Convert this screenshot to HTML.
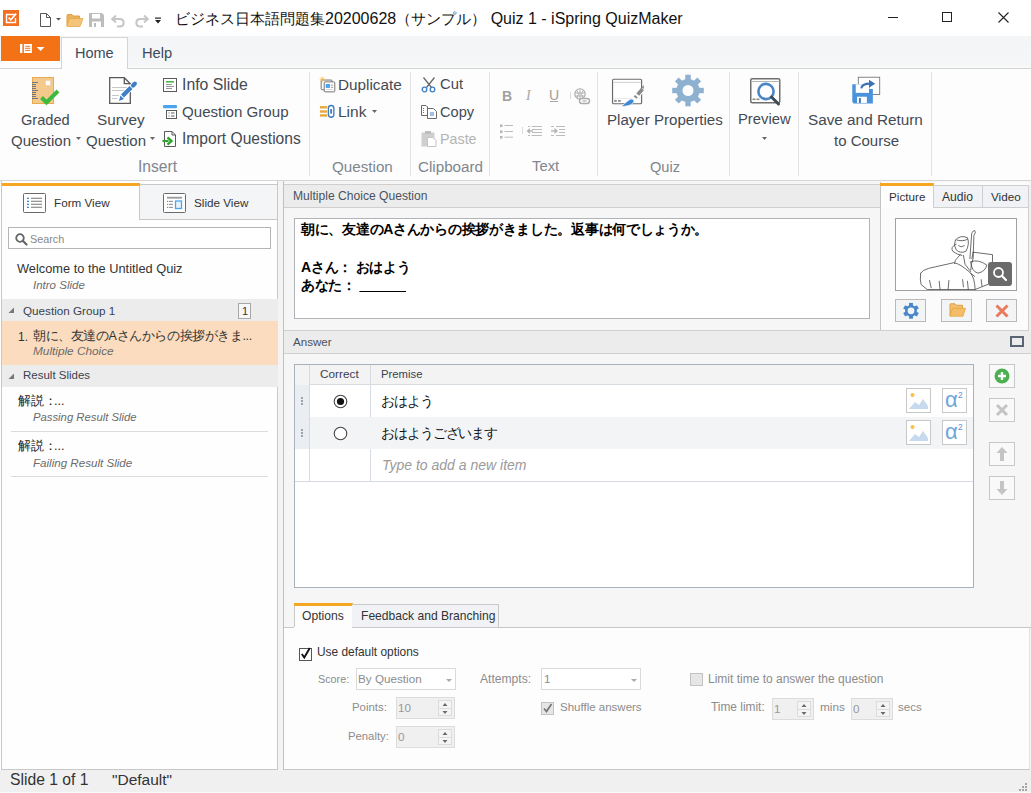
<!DOCTYPE html>
<html><head><meta charset="utf-8">
<style>
*{box-sizing:border-box;margin:0;padding:0}
html,body{width:1031px;height:793px;overflow:hidden;background:#fff;font-family:"Liberation Sans",sans-serif;color:#333}
.a{position:absolute;white-space:nowrap}
svg.a{overflow:visible}
</style></head><body>
<div class="a" style="left:0px;top:0px;width:1031px;height:36px;background:#fff"></div>
<svg class="a" style="left:3px;top:10px;" width="16" height="16" viewBox="0 0 16 16"><rect x="0" y="0" width="16" height="16" fill="#f26f21"/><path d="M11.5 4.5 H3.5 V12.5 H12.5 V8" fill="none" stroke="#fff" stroke-width="1.4"/><path d="M5.6 7.6 L7.8 9.8 L13.2 3.6" fill="none" stroke="#fff" stroke-width="1.6"/></svg>
<svg class="a" style="left:39px;top:13px;" width="24" height="15" viewBox="0 0 24 15"><path d="M1.5 0.5 H7.5 L11.5 4.5 V13.5 H1.5 Z" fill="#fff" stroke="#555" stroke-width="1"/><path d="M7.5 0.5 V4.5 H11.5" fill="none" stroke="#555"/><path d="M17 5 H22 L19.5 7.5 Z" fill="#555"/></svg>
<svg class="a" style="left:66px;top:14px;" width="18" height="13" viewBox="0 0 18 13"><path d="M1 12 V1.5 Q1 0.5 2 0.5 H6 L7.5 2 H13.5 V4.5" fill="#e9b35c" stroke="#e0a040" stroke-width="1"/><path d="M3.5 4.5 H17 L14 12.5 H1 Z" fill="#f3c47a" stroke="#e7a948" stroke-width="0.8"/></svg>
<svg class="a" style="left:89px;top:13px;" width="16" height="15" viewBox="0 0 16 15"><path d="M0 0 H13 L15 2 V14 H0 Z" fill="#bdbdbd"/><rect x="3" y="1" width="8" height="4.5" fill="#fff"/><rect x="3" y="8.5" width="9" height="5.5" fill="#fff"/><rect x="5" y="10" width="2" height="4" fill="#bdbdbd"/></svg>
<svg class="a" style="left:111px;top:15px;" width="16" height="12" viewBox="0 0 16 12"><path d="M5 0.5 L1.2 4 L5 7.5" fill="none" stroke="#c6c6c6" stroke-width="2"/><path d="M1.5 4 H9.5 A3.8 3.8 0 0 1 9.5 11.5 H6" fill="none" stroke="#c6c6c6" stroke-width="2"/></svg>
<svg class="a" style="left:133px;top:15px;" width="16" height="12" viewBox="0 0 16 12"><path d="M11 0.5 L14.8 4 L11 7.5" fill="none" stroke="#c6c6c6" stroke-width="2"/><path d="M14.5 4 H6.5 A3.8 3.8 0 0 0 6.5 11.5 H10" fill="none" stroke="#c6c6c6" stroke-width="2"/></svg>
<svg class="a" style="left:155px;top:17px;" width="7" height="7" viewBox="0 0 7 7"><rect x="0" y="0.5" width="6" height="1.2" fill="#222"/><path d="M0 3 H6 L3 6.5 Z" fill="#222"/></svg>
<div class="a" style="left:175px;top:11.30px;font-size:15px;line-height:15px;color:#111;">ビジネス日本語問題集<span style="font-size:16px">20200628</span>（サンプル）<span style="font-size:16px"> Quiz 1 - iSpring QuizMaker</span></div>
<div class="a" style="left:888px;top:17px;width:10px;height:1px;background:#222"></div>
<div class="a" style="left:942px;top:12px;width:10px;height:10px;border:1px solid #222"></div>
<svg class="a" style="left:998px;top:12px;" width="11" height="11" viewBox="0 0 11 11"><path d="M0.5 0.5 L10.5 10.5 M10.5 0.5 L0.5 10.5" stroke="#222" stroke-width="1.1"/></svg>
<div class="a" style="left:0px;top:36px;width:1031px;height:32px;background:linear-gradient(#f3f5f7,#f4f6f8 90%,#fafafa)"></div>
<div class="a" style="left:0px;top:68px;width:1031px;height:1px;background:#d4d4d4"></div>
<div class="a" style="left:1px;top:36px;width:59px;height:25px;background:#f47216"></div>
<div class="a" style="left:0px;top:61px;width:61px;height:7px;background:#fdfdfd"></div>
<svg class="a" style="left:20px;top:44px;" width="25" height="9" viewBox="0 0 25 9"><rect x="0" y="0" width="2.4" height="9" fill="#fff"/><rect x="3.9" y="0" width="8" height="9" fill="#fff"/><rect x="5.2" y="1.8" width="5" height="1" fill="#f47216"/><rect x="5.2" y="3.8" width="5" height="1" fill="#f47216"/><rect x="5.2" y="5.9" width="5" height="1" fill="#f47216"/><path d="M16.7 3 H24.5 L20.6 7 Z" fill="#fff"/></svg>
<div class="a" style="left:61px;top:37px;width:67px;height:32px;background:#fdfdfd;border:1px solid #d4d4d4;border-bottom:none"></div>
<div class="a" style="left:75px;top:45.73px;font-size:14.5px;line-height:14.5px;color:#3d4a5c;">Home</div>
<div class="a" style="left:142px;top:45.56px;font-size:14.7px;line-height:14.7px;color:#3d4a5c;">Help</div>
<div class="a" style="left:0px;top:69px;width:1031px;height:111px;background:#fdfdfd"></div>
<div class="a" style="left:0px;top:180px;width:1031px;height:1px;background:#d5d5d5"></div>
<div class="a" style="left:309px;top:72px;width:1px;height:104px;background:#e2e2e2"></div>
<div class="a" style="left:410px;top:72px;width:1px;height:104px;background:#e2e2e2"></div>
<div class="a" style="left:489px;top:72px;width:1px;height:104px;background:#e2e2e2"></div>
<div class="a" style="left:597px;top:72px;width:1px;height:104px;background:#e2e2e2"></div>
<div class="a" style="left:729px;top:72px;width:1px;height:104px;background:#e2e2e2"></div>
<div class="a" style="left:798px;top:72px;width:1px;height:104px;background:#e2e2e2"></div>
<div class="a" style="left:931px;top:72px;width:1px;height:104px;background:#e2e2e2"></div>
<div class="a" style="left:21px;top:112.64px;font-size:14.6px;line-height:14.6px;color:#444a52;">Graded</div>
<div class="a" style="left:11px;top:133.30px;font-size:15px;line-height:15px;color:#444a52;">Question</div>
<div class="a" style="left:97px;top:112.05px;font-size:15.3px;line-height:15.3px;color:#444a52;">Survey</div>
<div class="a" style="left:86px;top:133.30px;font-size:15px;line-height:15px;color:#444a52;">Question</div>
<div class="a" style="left:182px;top:76.63px;font-size:15.8px;line-height:15.8px;color:#444a52;">Info Slide</div>
<div class="a" style="left:182px;top:104.22px;font-size:15.1px;line-height:15.1px;color:#444a52;">Question Group</div>
<div class="a" style="left:182px;top:130.79px;font-size:15.6px;line-height:15.6px;color:#444a52;">Import Questions</div>
<div class="a" style="left:138px;top:158.79px;font-size:15.6px;line-height:15.6px;color:#80868e;">Insert</div>
<div class="a" style="left:338px;top:77.05px;font-size:15.3px;line-height:15.3px;color:#444a52;">Duplicate</div>
<div class="a" style="left:338px;top:103.88px;font-size:15.5px;line-height:15.5px;color:#444a52;">Link</div>
<div class="a" style="left:332px;top:159.13px;font-size:15.2px;line-height:15.2px;color:#80868e;">Question</div>
<div class="a" style="left:440px;top:77.47px;font-size:14.8px;line-height:14.8px;color:#444a52;">Cut</div>
<div class="a" style="left:440px;top:104.64px;font-size:14.6px;line-height:14.6px;color:#444a52;">Copy</div>
<div class="a" style="left:440px;top:131.90px;font-size:14.3px;line-height:14.3px;color:#b4b4b4;">Paste</div>
<div class="a" style="left:418px;top:159.13px;font-size:15.2px;line-height:15.2px;color:#80868e;">Clipboard</div>
<div class="a" style="left:532px;top:159.47px;font-size:14.8px;line-height:14.8px;color:#80868e;">Text</div>
<div class="a" style="left:607px;top:112.22px;font-size:15.1px;line-height:15.1px;color:#444a52;">Player Properties</div>
<div class="a" style="left:650px;top:159.64px;font-size:14.6px;line-height:14.6px;color:#80868e;">Quiz</div>
<div class="a" style="left:738px;top:112.47px;font-size:14.8px;line-height:14.8px;color:#444a52;">Preview</div>
<div class="a" style="left:808px;top:112.05px;font-size:15.3px;line-height:15.3px;color:#444a52;">Save and Return</div>
<div class="a" style="left:834px;top:133.30px;font-size:15px;line-height:15px;color:#444a52;">to Course</div>
<svg class="a" style="left:32px;top:77px;" width="28" height="28" viewBox="0 0 28 28"><rect x="0.5" y="0.5" width="21" height="26" fill="#f4ca8c" stroke="#e9aa52" stroke-width="1"/><rect x="0" y="5" width="6" height="1" fill="#5a6a8a" opacity="0.85"/><rect x="0" y="7" width="4" height="1" fill="#5a6a8a" opacity="0.85"/><rect x="0" y="9" width="4" height="1" fill="#5a6a8a" opacity="0.85"/><rect x="0" y="11" width="4" height="1" fill="#5a6a8a" opacity="0.85"/><rect x="0" y="13" width="6" height="1" fill="#5a6a8a" opacity="0.85"/><rect x="0" y="15" width="4" height="1" fill="#5a6a8a" opacity="0.85"/><rect x="0" y="17" width="4" height="1" fill="#5a6a8a" opacity="0.85"/><rect x="0" y="19" width="4" height="1" fill="#5a6a8a" opacity="0.85"/><rect x="0" y="21" width="6" height="1" fill="#5a6a8a" opacity="0.85"/><rect x="13.5" y="3.5" width="5" height="5" fill="#fff" stroke="#e9c9a0" stroke-width="0.6"/><path d="M9.5 20.5 L14.5 25.5 L26 14" fill="none" stroke="#3dba3d" stroke-width="4"/></svg>
<svg class="a" style="left:109px;top:77px;" width="28" height="28" viewBox="0 0 28 28"><path d="M0.7 0.7 H15.3 L21.3 6.7 V26.3 H0.7 Z" fill="#fff" stroke="#595959" stroke-width="1.3"/><path d="M15.3 0.7 V6.7 H21.3" fill="none" stroke="#595959" stroke-width="1.3"/><path d="M3 10.5 H18 M3 13.5 H16 M3 18.5 H10 M3 21.5 H8" stroke="#c8c8c8" stroke-width="1"/><path d="M13.5 19 L23.5 9" stroke="#fff" stroke-width="6"/><path d="M13.5 19 L22 10.5" stroke="#3f7fc6" stroke-width="4.2"/><path d="M24 8.5 L25.8 6.7" stroke="#3f7fc6" stroke-width="4.2" stroke-linecap="round"/><path d="M10 24 L11.5 18.5 L15 22 Z" fill="#3f7fc6"/></svg>
<svg class="a" style="left:163px;top:78px;" width="15" height="15" viewBox="0 0 15 15"><rect x="0.5" y="0.5" width="13" height="13" fill="#fff" stroke="#5a5a5a"/><rect x="3" y="3" width="8" height="1.6" fill="#4cb84c"/><path d="M3 6.5 H9 M3 8.5 H11 M3 10.5 H9" stroke="#8a8a8a" stroke-width="0.9"/></svg>
<svg class="a" style="left:163px;top:105px;" width="15" height="15" viewBox="0 0 15 15"><rect x="0" y="0" width="14" height="3.2" rx="1.2" fill="#4aa3ef"/><rect x="3.5" y="5.5" width="10" height="8" fill="#fff" stroke="#5a5a5a"/><path d="M5.5 8 H6.5 M8 8 H11.5 M5.5 11 H6.5 M8 11 H11.5" stroke="#5a5a5a" stroke-width="1"/></svg>
<svg class="a" style="left:162px;top:131px;" width="16" height="16" viewBox="0 0 16 16"><path d="M2.5 0.5 H10 L13.5 4 V15.5 H2.5 Z" fill="#fff" stroke="#5a5a5a"/><path d="M10 0.5 V4 H13.5" fill="none" stroke="#5a5a5a"/><path d="M0.5 10 H6.5" stroke="#2ea42e" stroke-width="2.2"/><path d="M5.5 6.3 L9.5 10 L5.5 13.7" fill="none" stroke="#2ea42e" stroke-width="2.4"/></svg>
<svg class="a" style="left:316px;top:74px" width="24" height="48" viewBox="0 0 396 793"><rect x="85" y="100" width="180" height="160" rx="15" fill="#fff" stroke="#707070" stroke-width="16"/><rect x="135" y="130" width="175" height="165" rx="15" fill="#fff" stroke="#707070" stroke-width="16"/><rect x="160" y="165" width="70" height="65" fill="#4aa3ef"/><path d="M245 185 H280 M245 220 H280" stroke="#777" stroke-width="12"/><path d="M165 255 H280" stroke="#aaa" stroke-width="8"/><path d="M105 45 V135 M60 90 H150 M73 58 L137 122 M137 58 L73 122" stroke="#f2b84b" stroke-width="12"/><rect x="65" y="530" width="120" height="40" fill="#e8a93c"/><rect x="65" y="600" width="120" height="40" fill="#e8a93c"/><rect x="65" y="665" width="120" height="40" fill="#e8a93c"/><rect x="205" y="520" width="90" height="195" rx="45" fill="none" stroke="#3d7cc0" stroke-width="22"/><rect x="235" y="580" width="30" height="75" fill="#3d7cc0"/></svg>
<svg class="a" style="left:372px;top:110px;" width="5" height="3" viewBox="0 0 5 3"><path d="M0 0 H5 L2.5 3 Z" fill="#666"/></svg>
<svg class="a" style="left:421px;top:77px;" width="16" height="16" viewBox="0 0 16 16"><path d="M2.5 0.5 L10.5 10.5 M13.5 0.5 L5.5 10.5" stroke="#6a6a6a" stroke-width="1.3"/><circle cx="3.5" cy="12.5" r="2.3" fill="#fff" stroke="#3f7fc6" stroke-width="1.3"/><circle cx="11.5" cy="12.5" r="2.3" fill="#fff" stroke="#3f7fc6" stroke-width="1.3"/></svg>
<svg class="a" style="left:421px;top:105px;" width="17" height="15" viewBox="0 0 17 15"><path d="M0.5 0.5 H5 L6.5 2 V10.5 H0.5 Z" fill="#fff" stroke="#6a6a6a"/><path d="M2 3.5 H3 M2 5.5 H3 M2 7.5 H3" stroke="#3f7fc6"/><path d="M6.5 3.5 H12.5 L15.5 6.5 V13.5 H6.5 Z" fill="#fff" stroke="#6a6a6a"/><path d="M9 8 H13 M9 10 H13" stroke="#3f7fc6"/></svg>
<svg class="a" style="left:421px;top:131px;" width="16" height="16" viewBox="0 0 16 16"><rect x="0.5" y="1.5" width="13" height="14" fill="#cfcfcf"/><rect x="4" y="0" width="6" height="3" fill="#bdbdbd"/><path d="M6.5 6.5 H12 L15 9.5 V15.5 H6.5 Z" fill="#fff" stroke="#c4c4c4"/></svg>
<div class="a" style="left:502px;top:89.15px;font-size:14px;line-height:14px;color:#a0a0a0;font-weight:bold">B</div>
<div class="a" style="left:526px;top:89.15px;font-size:14px;line-height:14px;color:#a8a8a8;font-family:'Liberation Serif',serif;font-style:italic">I</div>
<div class="a" style="left:549px;top:88.15px;font-size:14px;line-height:14px;color:#a0a0a0;">U</div>
<div class="a" style="left:550px;top:101px;width:8px;height:1px;background:#a8a8a8"></div>
<div class="a" style="left:570px;top:92px;width:1px;height:7px;background:#dcdcdc"></div>
<svg class="a" style="left:574px;top:88px;" width="17" height="17" viewBox="0 0 17 17"><circle cx="6" cy="6" r="5.2" fill="none" stroke="#ababab" stroke-width="1.1"/><path d="M1 5 H11 M1 8 H11 M6 1 V11 M3 2.5 Q6 6 3 10 M9 2.5 Q6 6 9 10" fill="none" stroke="#ababab" stroke-width="0.9"/><rect x="5.5" y="10.5" width="10" height="5" rx="2.5" fill="#fff" stroke="#ababab" stroke-width="1.4"/><path d="M8.5 13 H12.5" stroke="#ababab" stroke-width="1.2"/></svg>
<svg class="a" style="left:500px;top:124px;" width="14" height="15" viewBox="0 0 14 15"><rect x="0" y="0.5" width="2.5" height="2.5" fill="#b4b4b4"/><rect x="0" y="6.5" width="2.5" height="2.5" fill="#b4b4b4"/><rect x="0" y="12" width="2.5" height="2.5" fill="#b4b4b4"/><path d="M4.5 1.5 H13 M4.5 7.5 H13 M4.5 13.2 H13" stroke="#b4b4b4" stroke-width="0.9"/></svg>
<div class="a" style="left:522px;top:127px;width:1px;height:7px;background:#dcdcdc"></div>
<svg class="a" style="left:526px;top:126px;" width="17" height="11" viewBox="0 0 17 11"><path d="M2 0.5 H4 M5.5 0.5 H16 M6 3.5 H16 M6 6.5 H16 M2 9.5 H4 M5.5 9.5 H16" stroke="#b4b4b4" stroke-width="0.9"/><path d="M0.5 5 L4 2 V8 Z" fill="#b4b4b4"/><path d="M2 5 H7" stroke="#b4b4b4" stroke-width="1.4"/></svg>
<svg class="a" style="left:551px;top:126px;" width="15" height="11" viewBox="0 0 15 11"><path d="M0 0.5 H3 M5 0.5 H14 M8 3.5 H14 M8 6.5 H14 M0 9.5 H3 M5 9.5 H14" stroke="#b4b4b4" stroke-width="0.9"/><path d="M7 5 L3.5 2 V8 Z" fill="#b4b4b4"/><path d="M0 5 H5" stroke="#b4b4b4" stroke-width="1.4"/></svg>
<svg class="a" style="left:608px;top:74px" width="40" height="36" viewBox="0 0 881 793"><rect x="100" y="115" width="640" height="540" rx="28" fill="#fff" stroke="#6b6b6b" stroke-width="26"/><path d="M120 185 H720" stroke="#bdbdbd" stroke-width="16"/><path d="M110 540 H730" stroke="#d0d0d0" stroke-width="10"/><rect x="135" y="572" width="58" height="40" fill="#8a8a8a"/><rect x="222" y="572" width="58" height="40" fill="#8a8a8a"/><path d="M560 560 L740 360" stroke="#fff" stroke-width="120"/><path d="M595 520 L625 487" stroke="#8a8a8a" stroke-width="80"/><path d="M655 455 L760 330" stroke="#8a8a8a" stroke-width="80"/><path d="M740 300 L790 240 L790 330 Z" fill="#8a8a8a"/><path d="M290 715 Q380 640 440 590 Q500 530 560 560 Q590 600 540 650 Q480 710 290 715 Z" fill="#3f86d2" stroke="#fff" stroke-width="14"/></svg>
<svg class="a" style="left:670px;top:73px;" width="36" height="36" viewBox="0 0 36 36"><circle cx="18" cy="17.5" r="11.6" fill="#8fb1d0"/><rect x="15.3" y="1.6999999999999993" width="5.4" height="15.8" fill="#8fb1d0" transform="rotate(0.0 18 17.5)"/><rect x="15.3" y="1.6999999999999993" width="5.4" height="15.8" fill="#8fb1d0" transform="rotate(45.0 18 17.5)"/><rect x="15.3" y="1.6999999999999993" width="5.4" height="15.8" fill="#8fb1d0" transform="rotate(90.0 18 17.5)"/><rect x="15.3" y="1.6999999999999993" width="5.4" height="15.8" fill="#8fb1d0" transform="rotate(135.0 18 17.5)"/><rect x="15.3" y="1.6999999999999993" width="5.4" height="15.8" fill="#8fb1d0" transform="rotate(180.0 18 17.5)"/><rect x="15.3" y="1.6999999999999993" width="5.4" height="15.8" fill="#8fb1d0" transform="rotate(225.0 18 17.5)"/><rect x="15.3" y="1.6999999999999993" width="5.4" height="15.8" fill="#8fb1d0" transform="rotate(270.0 18 17.5)"/><rect x="15.3" y="1.6999999999999993" width="5.4" height="15.8" fill="#8fb1d0" transform="rotate(315.0 18 17.5)"/><circle cx="18" cy="17.5" r="5.5" fill="#fdfdfd"/></svg>
<svg class="a" style="left:750px;top:78px;" width="32" height="29" viewBox="0 0 32 29"><rect x="0.75" y="0.75" width="29" height="24" rx="1.5" fill="#fff" stroke="#6e6e6e" stroke-width="1.5"/><path d="M1 3.5 H29.5" stroke="#b5b5b5" stroke-width="1"/><rect x="2.5" y="20.5" width="3" height="1.6" fill="#8a8a8a"/><rect x="6.5" y="20.5" width="3" height="1.6" fill="#8a8a8a"/><circle cx="16" cy="13.5" r="7.6" fill="#fff" stroke="#4a86c5" stroke-width="2.6"/><path d="M21.5 19 L28.5 26" stroke="#3e4a58" stroke-width="3" stroke-linecap="round"/></svg>
<svg class="a" style="left:762px;top:137px;" width="5" height="3" viewBox="0 0 5 3"><path d="M0 0 H5 L2.5 3 Z" fill="#666"/></svg>
<svg class="a" style="left:76px;top:137px;" width="5" height="3" viewBox="0 0 5 3"><path d="M0 0 H5 L2.5 3 Z" fill="#666"/></svg>
<svg class="a" style="left:150px;top:137px;" width="5" height="3" viewBox="0 0 5 3"><path d="M0 0 H5 L2.5 3 Z" fill="#666"/></svg>
<svg class="a" style="left:848px;top:74px" width="36" height="34" viewBox="0 0 840 793"><rect x="240" y="75" width="500" height="405" fill="#fff" stroke="#707070" stroke-width="20"/><path d="M100 240 H500 V350 H580 V690 H130 L100 650 Z" fill="#4a92dc"/><rect x="180" y="240" width="310" height="200" fill="#fff"/><rect x="210" y="530" width="230" height="145" fill="#fff"/><rect x="255" y="560" width="45" height="115" fill="#3a78c0"/><path d="M310 335 Q320 225 520 225" fill="none" stroke="#3a72b5" stroke-width="48"/><path d="M490 135 L635 228 L490 320 Z" fill="#3a72b5"/></svg>
<div class="a" style="left:1px;top:181px;width:277px;height:589px;background:#fefefe;border-left:1px solid #c8c8c8;border-right:1px solid #c8c8c8;border-bottom:1px solid #c8c8c8"></div>
<div class="a" style="left:139px;top:184px;width:139px;height:36px;background:#f3f5f7;border:1px solid #c8c8c8"></div>
<div class="a" style="left:2px;top:183px;width:138px;height:3px;background:#f5a623"></div>
<div class="a" style="left:54px;top:197.10px;font-size:11.7px;line-height:11.7px;color:#333;">Form View</div>
<div class="a" style="left:194px;top:197.10px;font-size:11.7px;line-height:11.7px;color:#333;">Slide View</div>
<div class="a" style="left:8px;top:227px;width:263px;height:22px;background:#fff;border:1px solid #b5b5b5"></div>
<div class="a" style="left:30px;top:233.86px;font-size:10.8px;line-height:10.8px;color:#888;">Search</div>
<div class="a" style="left:17px;top:263.16px;font-size:12.8px;line-height:12.8px;color:#333;">Welcome to the Untitled Quiz</div>
<div class="a" style="left:33px;top:280.27px;font-size:11.5px;line-height:11.5px;color:#6b6b6b;font-style:italic">Intro Slide</div>
<div class="a" style="left:2px;top:299px;width:276px;height:22px;background:#ececec"></div>
<div class="a" style="left:23px;top:305.10px;font-size:11.7px;line-height:11.7px;color:#3a4250;">Question Group 1</div>
<div class="a" style="left:238px;top:303px;width:13px;height:16px;background:#f7f7f7;border:1px solid #a8a8a8"></div>
<div class="a" style="left:242px;top:305.69px;font-size:11px;line-height:11px;color:#333;">1</div>
<div class="a" style="left:2px;top:321px;width:276px;height:44px;background:#fbdcbe"></div>
<div class="a" style="left:18px;top:330.84px;font-size:12px;line-height:12px;color:#333;">1.</div>
<div class="a" style="left:33px;top:330.42px;font-size:12.5px;line-height:12.5px;color:#333;letter-spacing:-0.4px">朝に、友達のAさんからの挨拶がきま...</div>
<div class="a" style="left:33px;top:346.01px;font-size:11.8px;line-height:11.8px;color:#6b6b6b;font-style:italic">Multiple Choice</div>
<div class="a" style="left:2px;top:365px;width:276px;height:22px;background:#ececec"></div>
<div class="a" style="left:23px;top:370.27px;font-size:11.5px;line-height:11.5px;color:#3a4250;">Result Slides</div>
<div class="a" style="left:18px;top:395.42px;font-size:12.5px;line-height:12.5px;color:#222;">解説<span style='letter-spacing:-3px'>：</span>...</div>
<div class="a" style="left:33px;top:412.43px;font-size:11.3px;line-height:11.3px;color:#6b6b6b;font-style:italic">Passing Result Slide</div>
<div class="a" style="left:11px;top:431px;width:257px;height:1px;background:#dcdcdc"></div>
<div class="a" style="left:18px;top:440.42px;font-size:12.5px;line-height:12.5px;color:#222;">解説<span style='letter-spacing:-3px'>：</span>...</div>
<div class="a" style="left:33px;top:457.18px;font-size:11.6px;line-height:11.6px;color:#6b6b6b;font-style:italic">Failing Result Slide</div>
<div class="a" style="left:11px;top:476px;width:257px;height:1px;background:#dcdcdc"></div>
<svg class="a" style="left:23px;top:193px;" width="23" height="20" viewBox="0 0 23 20"><rect x="0.5" y="0.5" width="22" height="19" rx="1" fill="#fff" stroke="#6a6a6a" stroke-width="1"/><rect x="4" y="4.7" width="2" height="1.3" fill="#3f86d2"/><rect x="8" y="4.7" width="11" height="1.2" fill="#8c8c8c"/><rect x="4" y="7.7" width="2" height="1.3" fill="#3f86d2"/><rect x="8" y="7.7" width="11" height="1.2" fill="#8c8c8c"/><rect x="4" y="10.7" width="2" height="1.3" fill="#3f86d2"/><rect x="8" y="10.7" width="11" height="1.2" fill="#8c8c8c"/><rect x="4" y="13.7" width="2" height="1.3" fill="#3f86d2"/><rect x="8" y="13.7" width="11" height="1.2" fill="#8c8c8c"/></svg>
<svg class="a" style="left:163px;top:193px;" width="23" height="20" viewBox="0 0 23 20"><rect x="0.5" y="0.5" width="22" height="19" rx="1" fill="#fff" stroke="#6a6a6a" stroke-width="1"/><rect x="4" y="3.8" width="15" height="1.8" fill="#999"/><rect x="4" y="7.8" width="1.2" height="1.2" fill="#888"/><rect x="6" y="7.8" width="4" height="1.2" fill="#999"/><rect x="4" y="10.8" width="1.2" height="1.2" fill="#888"/><rect x="6" y="10.8" width="4" height="1.2" fill="#999"/><rect x="4" y="13.8" width="1.2" height="1.2" fill="#888"/><rect x="6" y="13.8" width="4" height="1.2" fill="#999"/><rect x="12.5" y="8" width="6" height="7.5" fill="#e8f3fc" stroke="#4aa8f0" stroke-width="1.3"/></svg>
<svg class="a" style="left:15px;top:233px;" width="13" height="13" viewBox="0 0 13 13"><circle cx="5" cy="5" r="3.8" fill="none" stroke="#666" stroke-width="1.8"/><path d="M7.8 7.8 L11.5 11.5" stroke="#666" stroke-width="2.2" stroke-linecap="round"/></svg>
<svg class="a" style="left:8px;top:307px;" width="7" height="7" viewBox="0 0 7 7"><path d="M6 0.5 V6 H0.5 Z" fill="#777"/></svg>
<svg class="a" style="left:8px;top:373px;" width="7" height="7" viewBox="0 0 7 7"><path d="M6 0.5 V6 H0.5 Z" fill="#777"/></svg>
<div class="a" style="left:278px;top:181px;width:5px;height:589px;background:#f4f4f4"></div>
<div class="a" style="left:283px;top:181px;width:748px;height:589px;background:#f6f6f6;border-left:1px solid #c0c0c0"></div>
<div class="a" style="left:284px;top:184px;width:596px;height:24px;background:#ececec;border-top:1px solid #cfcfcf;border-bottom:1px solid #cfcfcf"></div>
<div class="a" style="left:293px;top:189.76px;font-size:12.1px;line-height:12.1px;color:#4a525c;">Multiple Choice Question</div>
<div class="a" style="left:294px;top:218px;width:576px;height:101px;background:#fff;border:1px solid #b0b4b8"></div>
<div class="a" style="left:880px;top:182px;width:149px;height:149px;background:#fbfbfb;border-left:1px solid #c4c4c4"></div>
<div class="a" style="left:284px;top:330px;width:747px;height:24px;background:#ececec;border-top:1px solid #cfcfcf;border-bottom:1px solid #cfcfcf"></div>
<div class="a" style="left:293px;top:336.18px;font-size:11.6px;line-height:11.6px;color:#4a525c;">Answer</div>
<div class="a" style="left:301px;top:222.15px;font-size:14px;line-height:14px;color:#000;font-weight:bold;letter-spacing:-0.3px">朝に、友達のAさんからの挨拶がきました。返事は何でしょうか。</div>
<div class="a" style="left:301px;top:260.15px;font-size:14px;line-height:14px;color:#000;font-weight:bold;letter-spacing:-0.3px">Aさん：&nbsp;おはよう</div>
<div class="a" style="left:301px;top:278.15px;font-size:14px;line-height:14px;color:#000;font-weight:bold;letter-spacing:-0.3px">あなた：&nbsp;<span style='text-decoration:underline'>&nbsp;&nbsp;&nbsp;&nbsp;&nbsp;&nbsp;&nbsp;&nbsp;&nbsp;&nbsp;&nbsp;&nbsp;&nbsp;</span></div>
<div class="a" style="left:880px;top:183px;width:54px;height:3px;background:#f5a623"></div>
<div class="a" style="left:881px;top:186px;width:53px;height:22px;background:#fdfdfd"></div>
<div class="a" style="left:933px;top:185px;width:50px;height:23px;background:#f0f2f5;border:1px solid #cfcfcf;border-bottom:1px solid #cfcfcf"></div>
<div class="a" style="left:982px;top:185px;width:47px;height:23px;background:#f0f2f5;border:1px solid #cfcfcf"></div>
<div class="a" style="left:889px;top:191.10px;font-size:11.7px;line-height:11.7px;color:#333;">Picture</div>
<div class="a" style="left:942px;top:190.76px;font-size:12.1px;line-height:12.1px;color:#333;">Audio</div>
<div class="a" style="left:991px;top:191.10px;font-size:11.7px;line-height:11.7px;color:#333;">Video</div>
<div class="a" style="left:1028px;top:185px;width:3px;height:146px;background:#f0f0f0;border-left:1px solid #cfcfcf"></div>
<div class="a" style="left:895px;top:218px;width:122px;height:73px;background:#fff;border:1px solid #a0a0a0"></div>
<div class="a" style="left:1010px;top:336px;width:14px;height:11px;border:2px solid #5b6472"></div>
<div class="a" style="left:294px;top:364px;width:680px;height:224px;background:#fff;border:1px solid #a9b2bb"></div>
<div class="a" style="left:295px;top:365px;width:678px;height:20px;background:#f3f3f3;border-bottom:1px solid #d8dde2"></div>
<div class="a" style="left:295px;top:385px;width:15px;height:64px;background:#eaeef3"></div>
<div class="a" style="left:295px;top:365px;width:15px;height:20px;background:#f3f3f3"></div>
<div class="a" style="left:309px;top:365px;width:1px;height:117px;background:#d5dbe0"></div>
<div class="a" style="left:370px;top:365px;width:1px;height:117px;background:#d5dbe0"></div>
<div class="a" style="left:310px;top:417px;width:663px;height:32px;background:#f3f4f6"></div>
<div class="a" style="left:295px;top:481px;width:678px;height:1px;background:#d5dbe0"></div>
<div class="a" style="left:320px;top:369.01px;font-size:11.8px;line-height:11.8px;color:#3a4250;">Correct</div>
<div class="a" style="left:381px;top:369.43px;font-size:11.3px;line-height:11.3px;color:#3a4250;">Premise</div>
<div class="a" style="left:381px;top:394.57px;font-size:13.5px;line-height:13.5px;color:#111;letter-spacing:-1.1px">おはよう</div>
<div class="a" style="left:381px;top:426.57px;font-size:13.5px;line-height:13.5px;color:#111;letter-spacing:-1.1px">おはようございます</div>
<div class="a" style="left:382px;top:458.15px;font-size:14px;line-height:14px;color:#9a9a9a;font-style:italic">Type to add a new item</div>
<div class="a" style="left:301px;top:397px;width:2px;height:2px;background:#9aa3ad"></div>
<div class="a" style="left:301px;top:400px;width:2px;height:2px;background:#9aa3ad"></div>
<div class="a" style="left:301px;top:403px;width:2px;height:2px;background:#9aa3ad"></div>
<div class="a" style="left:301px;top:429px;width:2px;height:2px;background:#9aa3ad"></div>
<div class="a" style="left:301px;top:432px;width:2px;height:2px;background:#9aa3ad"></div>
<div class="a" style="left:301px;top:435px;width:2px;height:2px;background:#9aa3ad"></div>
<svg class="a" style="left:333px;top:394px;" width="15" height="15" viewBox="0 0 15 15"><circle cx="7.5" cy="7.5" r="6.3" fill="#fff" stroke="#444" stroke-width="1.1"/><circle cx="7.5" cy="7.5" r="3.6" fill="#111"/></svg>
<svg class="a" style="left:333px;top:426px;" width="15" height="15" viewBox="0 0 15 15"><circle cx="7.5" cy="7.5" r="6.3" fill="#fff" stroke="#444" stroke-width="1.1"/></svg>
<div class="a" style="left:906px;top:388px;width:25px;height:25px;background:#fff;border:1px solid #c8c8c8"></div>
<svg class="a" style="left:908px;top:390px;" width="21" height="21" viewBox="0 0 21 21"><circle cx="4.5" cy="5" r="2" fill="#f7c04a"/><path d="M1 19 L7 12 L11 15 L15 9 L20 16 V19 Z" fill="#c6d9ee"/></svg>
<div class="a" style="left:942px;top:388px;width:25px;height:25px;background:#fff;border:1px solid #c8c8c8"></div>
<div class="a" style="left:945px;top:389.38px;font-size:22px;line-height:22px;color:#6aa6dc;">&alpha;</div>
<div class="a" style="left:958px;top:390.80px;font-size:8.5px;line-height:8.5px;color:#6a8fd8;">2</div>
<div class="a" style="left:906px;top:420px;width:25px;height:25px;background:#fff;border:1px solid #c8c8c8"></div>
<svg class="a" style="left:908px;top:422px;" width="21" height="21" viewBox="0 0 21 21"><circle cx="4.5" cy="5" r="2" fill="#f7c04a"/><path d="M1 19 L7 12 L11 15 L15 9 L20 16 V19 Z" fill="#c6d9ee"/></svg>
<div class="a" style="left:942px;top:420px;width:25px;height:25px;background:#fff;border:1px solid #c8c8c8"></div>
<div class="a" style="left:945px;top:421.38px;font-size:22px;line-height:22px;color:#6aa6dc;">&alpha;</div>
<div class="a" style="left:958px;top:422.80px;font-size:8.5px;line-height:8.5px;color:#6a8fd8;">2</div>
<div class="a" style="left:989px;top:364px;width:26px;height:24px;background:#f9f9f9;border:1px solid #c8c8c8"></div>
<div class="a" style="left:989px;top:398px;width:26px;height:24px;background:#f9f9f9;border:1px solid #c8c8c8"></div>
<div class="a" style="left:989px;top:442px;width:26px;height:24px;background:#f9f9f9;border:1px solid #c8c8c8"></div>
<div class="a" style="left:989px;top:476px;width:26px;height:24px;background:#f9f9f9;border:1px solid #c8c8c8"></div>
<svg class="a" style="left:994px;top:368px;" width="16" height="16" viewBox="0 0 16 16"><circle cx="8" cy="8" r="7.5" fill="#4caf50"/><path d="M8 4 V12 M4 8 H12" stroke="#fff" stroke-width="2.4"/></svg>
<svg class="a" style="left:995px;top:403px;" width="14" height="14" viewBox="0 0 14 14"><path d="M2 2 L12 12 M12 2 L2 12" stroke="#c4c4c4" stroke-width="3"/></svg>
<svg class="a" style="left:995px;top:446px;" width="14" height="16" viewBox="0 0 14 16"><path d="M7 1 L12.5 7 H9 V15 H5 V7 H1.5 Z" fill="#c4c4c4"/></svg>
<svg class="a" style="left:995px;top:480px;" width="14" height="16" viewBox="0 0 14 16"><path d="M7 15 L12.5 9 H9 V1 H5 V9 H1.5 Z" fill="#c4c4c4"/></svg>
<div class="a" style="left:284px;top:627px;width:747px;height:1px;background:#c8c8c8"></div>
<div class="a" style="left:294px;top:603px;width:59px;height:3px;background:#f5a623"></div>
<div class="a" style="left:294px;top:606px;width:59px;height:22px;background:#fdfdfd;border-left:1px solid #c8c8c8;border-right:1px solid #c8c8c8"></div>
<div class="a" style="left:352px;top:604px;width:147px;height:24px;background:#f0f2f5;border:1px solid #c8c8c8;border-left:none"></div>
<div class="a" style="left:302px;top:609.76px;font-size:12.1px;line-height:12.1px;color:#333;">Options</div>
<div class="a" style="left:361px;top:609.76px;font-size:12.1px;line-height:12.1px;color:#333;">Feedback and Branching</div>
<div class="a" style="left:284px;top:628px;width:746px;height:142px;background:#fdfdfd;border-right:1px solid #e2e2e2;border-bottom:1px solid #c8c8c8"></div>
<div class="a" style="left:294px;top:627px;width:58px;height:2px;background:#fdfdfd"></div>
<svg class="a" style="left:299px;top:647px;" width="14" height="14" viewBox="0 0 14 14"><rect x="0.5" y="1.5" width="12" height="12" fill="#fff" stroke="#555"/><path d="M2.8 7 L5.3 10.5 L10.8 1" fill="none" stroke="#111" stroke-width="1.9"/></svg>
<div class="a" style="left:317px;top:646.93px;font-size:11.9px;line-height:11.9px;color:#333;">Use default options</div>
<div class="a" style="left:318px;top:673.86px;font-size:10.8px;line-height:10.8px;color:#8c8c8c;">Score:</div>
<div class="a" style="left:356px;top:668px;width:100px;height:22px;background:#fff;border:1px solid #dadada"></div>
<div class="a" style="left:358px;top:673.10px;font-size:11.7px;line-height:11.7px;color:#8c8c8c;">By Question</div>
<svg class="a" style="left:446px;top:679px;" width="6" height="4" viewBox="0 0 6 4"><path d="M0 0 H6 L3 3 Z" fill="#aaa"/></svg>
<div class="a" style="left:480px;top:672.76px;font-size:12.1px;line-height:12.1px;color:#8c8c8c;">Attempts:</div>
<div class="a" style="left:541px;top:668px;width:100px;height:22px;background:#fff;border:1px solid #dadada"></div>
<div class="a" style="left:544px;top:673.10px;font-size:11.7px;line-height:11.7px;color:#8c8c8c;">1</div>
<svg class="a" style="left:631px;top:679px;" width="6" height="4" viewBox="0 0 6 4"><path d="M0 0 H6 L3 3 Z" fill="#aaa"/></svg>
<div class="a" style="left:352px;top:702.35px;font-size:11.4px;line-height:11.4px;color:#8c8c8c;">Points:</div>
<div class="a" style="left:348px;top:731.43px;font-size:11.3px;line-height:11.3px;color:#8c8c8c;">Penalty:</div>
<div class="a" style="left:396px;top:697px;width:59px;height:22px;background:#f0f0f0;border:1px solid #dcdcdc"></div>
<div class="a" style="left:398px;top:702.10px;font-size:11.7px;line-height:11.7px;color:#999;">10</div>
<div class="a" style="left:438px;top:700px;width:14px;height:16px;background:#f4f4f4;border:1px solid #dcdcdc"></div>
<div class="a" style="left:438px;top:708px;width:14px;height:1px;background:#dcdcdc"></div>
<svg class="a" style="left:441px;top:702px;" width="8" height="14" viewBox="0 0 8 14"><path d="M4 1 L6.5 4 H1.5 Z M4 12 L6.5 9 H1.5 Z" fill="#6a6a6a"/></svg>
<div class="a" style="left:396px;top:726px;width:59px;height:22px;background:#f0f0f0;border:1px solid #dcdcdc"></div>
<div class="a" style="left:398px;top:731.10px;font-size:11.7px;line-height:11.7px;color:#999;">0</div>
<div class="a" style="left:438px;top:729px;width:14px;height:16px;background:#f4f4f4;border:1px solid #dcdcdc"></div>
<div class="a" style="left:438px;top:737px;width:14px;height:1px;background:#dcdcdc"></div>
<svg class="a" style="left:441px;top:731px;" width="8" height="14" viewBox="0 0 8 14"><path d="M4 1 L6.5 4 H1.5 Z M4 12 L6.5 9 H1.5 Z" fill="#6a6a6a"/></svg>
<svg class="a" style="left:541px;top:702px;" width="14" height="14" viewBox="0 0 14 14"><rect x="0.5" y="0.5" width="12" height="12" fill="#e6e6e6" stroke="#c2c2c2"/><path d="M3 6.5 L5.5 9.5 L10.5 2" fill="none" stroke="#777" stroke-width="1.8"/></svg>
<div class="a" style="left:560px;top:702.27px;font-size:11.5px;line-height:11.5px;color:#8c8c8c;">Shuffle answers</div>
<div class="a" style="left:690px;top:673px;width:13px;height:13px;background:#e6e6e6;border:1px solid #c2c2c2"></div>
<div class="a" style="left:708px;top:672.84px;font-size:12px;line-height:12px;color:#8c8c8c;">Limit time to answer the question</div>
<div class="a" style="left:711px;top:701.93px;font-size:11.9px;line-height:11.9px;color:#8c8c8c;">Time limit:</div>
<div class="a" style="left:772px;top:698px;width:42px;height:22px;background:#f0f0f0;border:1px solid #dcdcdc"></div>
<div class="a" style="left:774px;top:703.10px;font-size:11.7px;line-height:11.7px;color:#999;">1</div>
<div class="a" style="left:797px;top:701px;width:14px;height:16px;background:#f4f4f4;border:1px solid #dcdcdc"></div>
<div class="a" style="left:797px;top:709px;width:14px;height:1px;background:#dcdcdc"></div>
<svg class="a" style="left:800px;top:703px;" width="8" height="14" viewBox="0 0 8 14"><path d="M4 1 L6.5 4 H1.5 Z M4 12 L6.5 9 H1.5 Z" fill="#6a6a6a"/></svg>
<div class="a" style="left:820px;top:702.01px;font-size:11.8px;line-height:11.8px;color:#8c8c8c;">mins</div>
<div class="a" style="left:851px;top:698px;width:42px;height:22px;background:#f0f0f0;border:1px solid #dcdcdc"></div>
<div class="a" style="left:853px;top:703.10px;font-size:11.7px;line-height:11.7px;color:#999;">0</div>
<div class="a" style="left:876px;top:701px;width:14px;height:16px;background:#f4f4f4;border:1px solid #dcdcdc"></div>
<div class="a" style="left:876px;top:709px;width:14px;height:1px;background:#dcdcdc"></div>
<svg class="a" style="left:879px;top:703px;" width="8" height="14" viewBox="0 0 8 14"><path d="M4 1 L6.5 4 H1.5 Z M4 12 L6.5 9 H1.5 Z" fill="#6a6a6a"/></svg>
<div class="a" style="left:898px;top:702.27px;font-size:11.5px;line-height:11.5px;color:#8c8c8c;">secs</div>
<svg class="a" style="left:915px;top:228px" width="80" height="64" viewBox="0 0 991 793"><g fill="none" stroke="#4a4a4a" stroke-width="10" stroke-linejoin="round" stroke-linecap="round"><path d="M70 560 Q90 520 170 500 L480 430 Q560 440 690 560 L740 600"/><path d="M70 560 Q60 640 75 700 L150 762 L745 762 L900 700"/><path d="M690 560 Q740 620 745 762"/><path d="M180 650 L200 740 M300 660 L310 760 M420 650 L410 760 M590 640 L600 730 M650 660 L660 760 M820 640 L830 720"/><path d="M720 300 L960 330 L960 470 M720 300 L705 380"/><path d="M690 420 Q780 380 890 460 Q870 540 780 560 Q700 540 690 420"/><path d="M680 380 L700 100 Q700 40 740 30 Q760 60 730 90 L720 380 Q700 420 690 520"/><path d="M500 150 Q560 80 650 120 Q680 200 630 290 Q560 320 510 270 Q470 210 500 150"/><path d="M520 150 Q600 170 650 140 M540 220 Q570 250 610 220"/><path d="M510 200 Q430 240 470 290 Q520 330 580 340"/><path d="M560 330 L500 400 L490 440 M600 340 L620 450 L690 540"/></g></svg>
<div class="a" style="left:988px;top:262px;width:24px;height:24px;background:#6b6b6b;border-radius:3px"></div>
<svg class="a" style="left:991px;top:265px;" width="18" height="18" viewBox="0 0 18 18"><circle cx="7.5" cy="7.5" r="4.5" fill="none" stroke="#fff" stroke-width="1.8"/><path d="M10.8 10.8 L15 15" stroke="#fff" stroke-width="2.2" stroke-linecap="round"/></svg>
<div class="a" style="left:895px;top:299px;width:31px;height:23px;background:#f3f4f6;border:1px solid #b9b9b9"></div>
<div class="a" style="left:941px;top:299px;width:31px;height:23px;background:#f3f4f6;border:1px solid #b9b9b9"></div>
<div class="a" style="left:986px;top:299px;width:31px;height:23px;background:#f3f4f6;border:1px solid #b9b9b9"></div>
<svg class="a" style="left:901px;top:301px;" width="20" height="20" viewBox="0 0 20 20"><circle cx="10" cy="9.8" r="5.9" fill="#4a88c7"/><rect x="8.05" y="1.9000000000000004" width="3.9" height="7.9" fill="#4a88c7" transform="rotate(0.0 10 9.8)"/><rect x="8.05" y="1.9000000000000004" width="3.9" height="7.9" fill="#4a88c7" transform="rotate(60.0 10 9.8)"/><rect x="8.05" y="1.9000000000000004" width="3.9" height="7.9" fill="#4a88c7" transform="rotate(120.0 10 9.8)"/><rect x="8.05" y="1.9000000000000004" width="3.9" height="7.9" fill="#4a88c7" transform="rotate(180.0 10 9.8)"/><rect x="8.05" y="1.9000000000000004" width="3.9" height="7.9" fill="#4a88c7" transform="rotate(240.0 10 9.8)"/><rect x="8.05" y="1.9000000000000004" width="3.9" height="7.9" fill="#4a88c7" transform="rotate(300.0 10 9.8)"/><circle cx="10" cy="9.8" r="3.4" fill="#f3f4f6"/></svg>
<svg class="a" style="left:949px;top:303px;" width="17" height="14" viewBox="0 0 17 14"><path d="M1 13 V1.5 Q1 0.8 1.8 0.8 H6 L7.5 2.3 H13.5 V5" fill="#f3c06b" stroke="#e0a040" stroke-width="1"/><path d="M3.5 5.3 H16.5 L14 13.2 H1 Z" fill="#f4be68" stroke="#e6a540" stroke-width="0.8"/></svg>
<svg class="a" style="left:995px;top:304px;" width="14" height="14" viewBox="0 0 14 14"><path d="M1.5 1.5 L12.5 12.5 M12.5 1.5 L1.5 12.5" stroke="#ea7a5c" stroke-width="3"/></svg>
<div class="a" style="left:0px;top:770px;width:1031px;height:22px;background:#f0f0f0"></div>
<div class="a" style="left:0px;top:792px;width:1031px;height:1px;background:#fafafa"></div>
<div class="a" style="left:1019px;top:789px;width:2px;height:2px;background:#a5a5a5"></div>
<div class="a" style="left:1022px;top:789px;width:2px;height:2px;background:#a5a5a5"></div>
<div class="a" style="left:1025px;top:789px;width:2px;height:2px;background:#a5a5a5"></div>
<div class="a" style="left:1022px;top:786px;width:2px;height:2px;background:#a5a5a5"></div>
<div class="a" style="left:1025px;top:786px;width:2px;height:2px;background:#a5a5a5"></div>
<div class="a" style="left:1025px;top:783px;width:2px;height:2px;background:#a5a5a5"></div>
<div class="a" style="left:10px;top:771.71px;font-size:15.7px;line-height:15.7px;color:#333;">Slide 1 of 1</div>
<div class="a" style="left:112px;top:771.88px;font-size:15.5px;line-height:15.5px;color:#333;">"Default"</div>
</body></html>
